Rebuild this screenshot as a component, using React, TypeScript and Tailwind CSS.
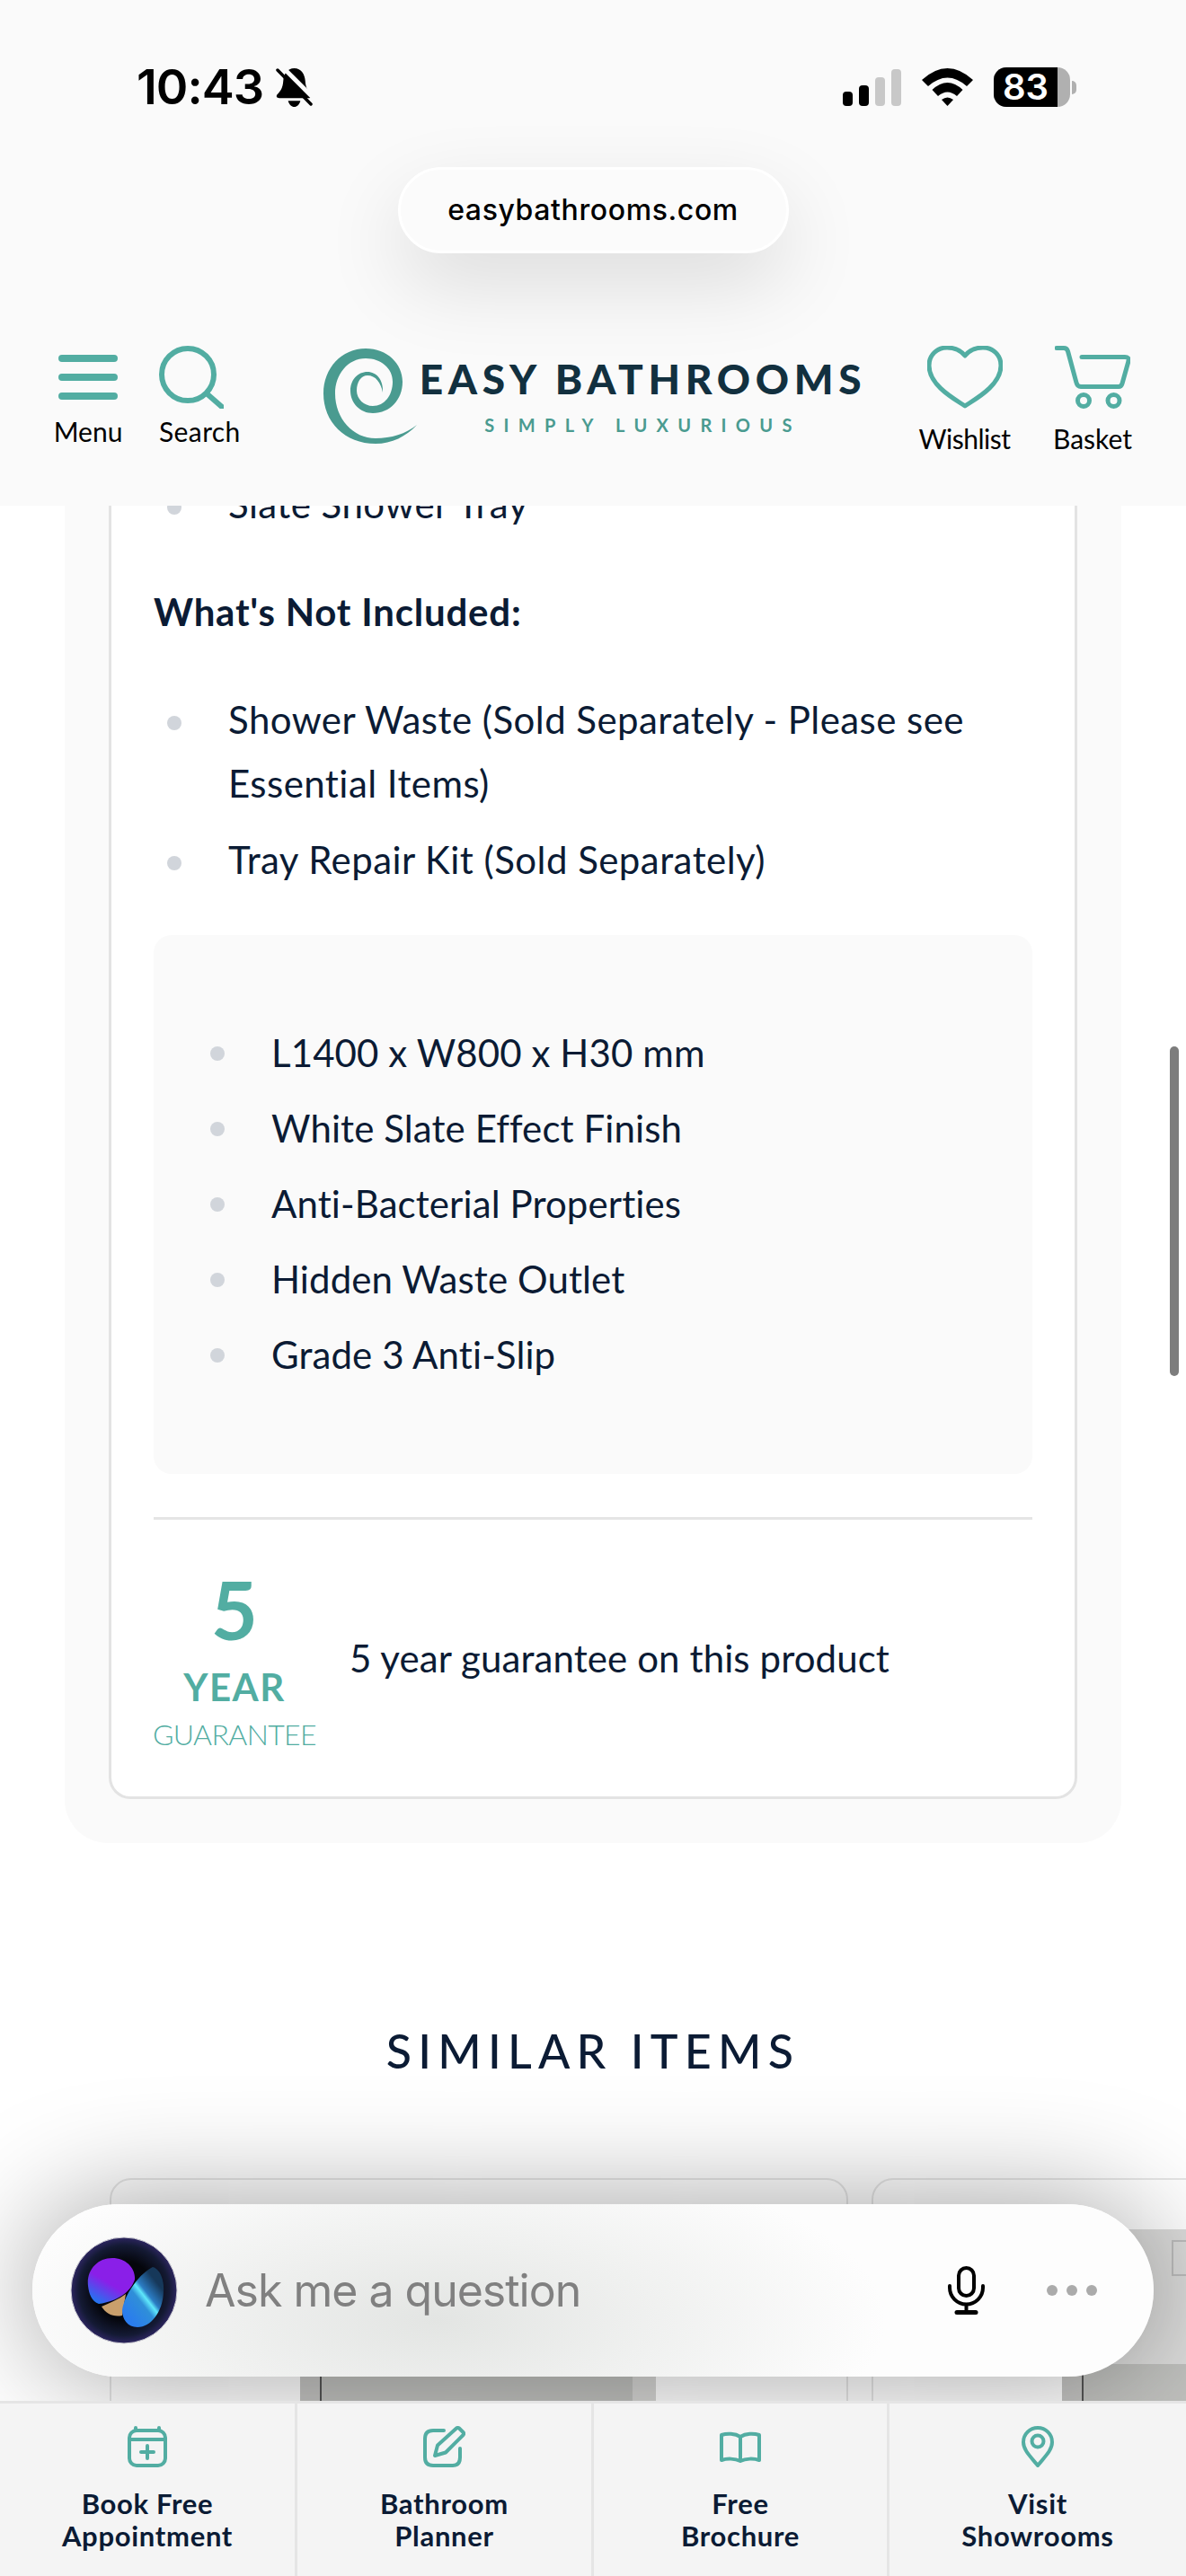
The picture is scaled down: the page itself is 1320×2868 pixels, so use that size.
const teal = "#52ada2";

const notIncluded = [
  ["Shower Waste (Sold Separately - Please see", "Essential Items)"],
  ["Tray Repair Kit (Sold Separately)"],
];

const specs = [
  "L1400 x W800 x H30 mm",
  "White Slate Effect Finish",
  "Anti-Bacterial Properties",
  "Hidden Waste Outlet",
  "Grade 3 Anti-Slip",
];

const StatusBar = () => (
  <div className="flex h-[46px] items-center justify-between pl-[152px] pr-[122px]">
    <div className="flex items-center">
      <span className="font-['Inter',sans-serif] text-[54px] leading-[46px] font-semibold tracking-[-1px] text-black">
        10:43
      </span>
      <svg width="41" height="45" viewBox="0 0 42 46" className="ml-[14px]">
        <path d="M21 1C13 1 9 8 8.500 15C8 24 5 27 1.500 31C0 33 1 35 4 35H38C41 35 42 33 40.500 31C37 27 34 24 33.500 15C33 8 29 1 21 1Z" fill="#000" />
        <path d="M14 38H28C27 42 24 45 21 45C18 45 15 42 14 38Z" fill="#000" />
        <path d="M7 -1L46 38" stroke="#fafafa" strokeWidth="5" />
        <path d="M2 3L40 42" stroke="#000" strokeWidth="3.500" strokeLinecap="round" />
      </svg>
    </div>
    <div className="flex items-center">
      <div className="flex items-end gap-[7px]">
        <div className="h-[16px] w-[11px] rounded-[4px] bg-black" />
        <div className="h-[23px] w-[11px] rounded-[4px] bg-black" />
        <div className="h-[32px] w-[11px] rounded-[4px] bg-[#c8c8c8]" />
        <div className="h-[41px] w-[11px] rounded-[4px] bg-[#c8c8c8]" />
      </div>
      <svg width="57" height="42" viewBox="0 0 57 42" className="ml-[23px]">
        <path d="M0 13Q28.500 -13 57 13L50 20Q28.500 1 7 20Z" fill="#000" />
        <path d="M11.500 24Q28.500 8 45.500 24L39 31Q28.500 22 18 31Z" fill="#000" />
        <path d="M22 35Q28.500 30 35 35L28.500 42Z" fill="#000" />
      </svg>
      <div className="ml-[23px] flex items-center">
        <div className="flex h-[44px] w-[85px] rounded-[14px] bg-[#b0b0b0]">
          <div className="flex h-full w-[71px] items-center justify-center rounded-l-[14px] bg-black font-['Inter',sans-serif] text-[40px] leading-[40px] font-semibold text-white">
            83
          </div>
        </div>
        <div className="ml-[2px] h-[15px] w-[5px] rounded-r-full bg-[#b0b0b0]" />
      </div>
    </div>
  </div>
);

const Logo = () => (
  <div className="ml-[92px] flex w-[601px]">
    <svg width="104" height="106" viewBox="0 0 104 106" className="mt-[3px] shrink-0">
      <path
        d="M104 85C92 98 76 106 58 106C24 106 0 82 0 50C0 22 20 0 47 0C71 0 88 17 88 37C88 57 74 72 55 72C41 72 30 61 30 47C30 35 38 26 49 26C59 26 67 35 66 49C64 38 58 30 49 30C42 30 37 37 37 47C37 56 45 64 55 64C68 64 77 52 77 37C77 22 64 11 47 11C27 11 13 29 13 50C13 78 33 100 58 100C75 100 92 95 104 85Z"
        fill="#4a9b90"
      />
    </svg>
    <div className="ml-[6px] flex w-[491px] flex-col items-center font-['Lato',sans-serif]">
      <div className="mt-[14px] text-[46px] leading-[46px] font-black tracking-[5.700px] whitespace-nowrap text-[#12303f]">
        EASY BATHROOMS
      </div>
      <div className="mt-[18px] text-[20px] leading-[20px] font-bold tracking-[10.300px] whitespace-nowrap text-[#4a9b90]">
        SIMPLY LUXURIOUS
      </div>
    </div>
  </div>
);

const Header = () => (
  <header className="relative z-10 h-[563px] shrink-0 bg-[#fafafa] pt-[74px]">
    <StatusBar />
    <div className="mx-auto mt-[66px] flex h-[96px] w-[435px] items-center justify-center rounded-full border-[3px] border-white bg-[#fbfbfb] font-['Inter',sans-serif] text-[32px] font-medium tracking-[0.6px] text-black shadow-[0_34px_90px_rgba(0,0,0,0.12)]">
      easybathrooms.com
    </div>
    <div className="mt-[103px] flex pl-[61px] font-['Lato',sans-serif] text-[30px] leading-[36px] text-black">
      <div className="flex w-[74px] flex-col items-center">
        <svg width="66" height="70" viewBox="0 0 66 70">
          <path d="M4 14H62M4 35H62M4 56H62" stroke={teal} strokeWidth="8" strokeLinecap="round" />
        </svg>
        <span className="mt-[7px]">Menu</span>
      </div>
      <div className="ml-[42px] flex w-[91px] flex-col items-start">
        <svg width="72" height="70" viewBox="0 0 72 70" fill="none" stroke={teal} strokeWidth="6">
          <circle cx="32" cy="32" r="29" />
          <path d="M54 54L70 68" strokeLinecap="round" />
        </svg>
        <span className="mt-[7px] tracking-[0.4px]">Search</span>
      </div>
      <Logo />
      <div className="ml-[64px] flex w-[97px] flex-col items-center">
        <svg width="84" height="70" viewBox="0 0 84 70" fill="none" stroke={teal} strokeWidth="5" strokeLinejoin="round">
          <path d="M42 67C30 59 2 44 2 22C2 10 11 2 22 2C31 2 38 6 42 11C46 6 53 2 62 2C73 2 82 10 82 22C82 44 54 59 42 67Z" />
        </svg>
        <span className="mt-[15px] tracking-[-0.5px]">Wishlist</span>
      </div>
      <div className="ml-[50px] flex w-[88px] flex-col items-center">
        <svg width="84" height="70" viewBox="0 0 84 70" fill="none" stroke={teal} strokeWidth="5" strokeLinecap="round">
          <path d="M2 2.500H10Q13.500 2.500 14.500 6L24 41Q25 45.500 29 45.500H71Q74 45.500 75 42L82 17Q83 12.500 78 12.500H30" />
          <circle cx="32" cy="61" r="6.500" />
          <circle cx="65.500" cy="61" r="6.500" />
        </svg>
        <span className="mt-[15px]">Basket</span>
      </div>
    </div>
  </header>
);

const Bullet = ({ text, lines }: { text?: string; lines?: string[] }) => (
  <li className="flex">
    <span className="mt-[31px] ml-[15px] h-[16px] w-[16px] shrink-0 rounded-full bg-[#d1d5db]" />
    <span className="ml-[52px] tracking-[0.45px]">
      {text}
      {lines?.map((line) => (
        <span key={line} className="block whitespace-nowrap">
          {line}
        </span>
      ))}
    </span>
  </li>
);

const ProductPanel = () => (
  <div className="mx-[72px] -mt-[37px] rounded-b-[48px] bg-[#fafafa] px-[49px] pb-[49px]">
    <div className="rounded-b-[24px] border-[3px] border-t-0 border-[#e3e3e3] bg-white px-[47px] text-[42px] leading-[71px] tracking-[0.1px] text-[#0b1b34]">
      <ul>
        <Bullet text="Slate Shower Tray" />
      </ul>
      <p className="mt-[49px] font-bold tracking-[0.8px]">What's Not Included:</p>
      <ul className="mt-[49px] flex flex-col gap-[14px]">
        {notIncluded.map((lines) => (
          <Bullet key={lines[0]} lines={lines} />
        ))}
      </ul>
      <div className="mt-[48px] h-[600px] rounded-[20px] bg-[#fafafa] pt-[89px]">
        <ul className="leading-[84px]">
          {specs.map((spec) => (
            <li key={spec} className="flex">
              <span className="mt-[35px] ml-[63px] h-[16px] w-[16px] shrink-0 rounded-full bg-[#d1d5db]" />
              <span className="ml-[52px]">{spec}</span>
            </li>
          ))}
        </ul>
      </div>
      <div className="mt-[48px] flex h-[311px] items-center border-t-[3px] border-[#e5e5e5]">
        <div className="flex w-[180px] flex-col items-center text-[#52ada2]">
          <span className="text-[90px] leading-[90px] font-bold">5</span>
          <span className="mt-[21px] text-[42px] leading-[42px] font-bold tracking-[1.500px]">YEAR</span>
          <span className="mt-[16px] text-[32px] leading-[32px] font-light tracking-[-0.6px]">GUARANTEE</span>
        </div>
        <p className="ml-[38px]">5 year guarantee on this product</p>
      </div>
    </div>
  </div>
);

const SimilarCard = () => (
  <div className="h-[400px] w-[822px] shrink-0 rounded-t-[24px] border-2 border-[#e6e6e6] bg-white pt-[55px] pl-[210px]">
    <div className="relative h-full w-[396px] bg-[#dcdcdb]">
      <div className="absolute top-[12px] left-[122px] h-[40px] w-[60px] border-2 border-[#bdbdbd]" />
      <div className="absolute top-[150px] left-0 flex h-[250px] w-full bg-[#c8c8c6]">
        <div className="w-[24px] border-r-2 border-[#555] bg-[#c4c4c2]" />
        <div className="w-[346px] bg-[#c0c1be]" />
        <div className="flex-1 bg-[#d6d6d4]" />
      </div>
    </div>
  </div>
);

const ChatBar = () => (
  <div className="absolute top-[2454px] left-[36px] z-[5] flex h-[192px] w-[1248px] items-center rounded-full bg-[radial-gradient(ellipse_500px_190px_at_450px_130px,#e3e5e3,#fdfdfd)] pl-[42px] shadow-[0_0_130px_rgba(0,0,0,0.38)]">
    <svg width="120" height="120" viewBox="0 0 120 120" className="shrink-0">
      <defs>
        <radialGradient id="orbBg" cx="50%" cy="50%" r="50%">
          <stop offset="0.55" stopColor="#05060c" />
          <stop offset="0.85" stopColor="#141a34" />
          <stop offset="1" stopColor="#2c2560" />
        </radialGradient>
        <linearGradient id="orbPurple" x1="0.7" y1="0.2" x2="0.2" y2="1">
          <stop offset="0.45" stopColor="#8a1fe8" />
          <stop offset="1" stopColor="#1f78f0" />
        </linearGradient>
        <linearGradient id="orbLeaf" x1="0.9" y1="0.1" x2="0.2" y2="0.9">
          <stop offset="0.15" stopColor="#16385a" />
          <stop offset="0.42" stopColor="#2b7cc4" />
          <stop offset="0.5" stopColor="#5fe8fb" />
          <stop offset="0.62" stopColor="#2f8fd8" />
          <stop offset="1" stopColor="#2a7cee" />
        </linearGradient>
      </defs>
      <circle cx="60" cy="60" r="59" fill="url(#orbBg)" stroke="#cfcfd4" strokeWidth="1" />
      <path d="M35 78C44 74 54 70 62 64L58 88C48 90 40 86 35 78Z" fill="#c99f6c" />
      <path d="M20 55C18 38 30 24 47 24C62 24 73 35 72 48C68 60 55 72 32 75C24 72 21 64 20 55Z" fill="url(#orbPurple)" />
      <path d="M92 34C100 36 105 48 104 62C103 84 90 101 75 101C64 101 58 92 58 82C60 66 76 42 92 34Z" fill="url(#orbLeaf)" />
    </svg>
    <span className="ml-[30px] font-['Inter',sans-serif] text-[50px] tracking-[-1px] text-[#808080]">
      Ask me a question
    </span>
    <svg width="41" height="54" viewBox="0 0 41 54" fill="none" stroke="#000" strokeWidth="4" className="ml-auto shrink-0">
      <rect x="12" y="2" width="17" height="31" rx="8.500" />
      <path d="M2 22V24A18.500 18.500 0 0 0 39 24V22" strokeLinecap="round" />
      <path d="M20.500 42V50" />
      <path d="M10 51.500H31" strokeWidth="5" strokeLinecap="round" />
    </svg>
    <div className="mr-[63px] ml-[69px] flex gap-[10px]">
      <div className="h-[12px] w-[12px] rounded-full bg-[#ababab]" />
      <div className="h-[12px] w-[12px] rounded-full bg-[#ababab]" />
      <div className="h-[12px] w-[12px] rounded-full bg-[#ababab]" />
    </div>
  </div>
);

const navIconClass = "h-[46px] shrink-0";

const BottomNav = () => (
  <nav className="relative z-10 flex h-[195px] shrink-0 border-t-[3px] border-[#e5e5e5] bg-[#f4f4f4] font-['Lato',sans-serif] text-[31px] leading-[36px] font-bold tracking-[0.7px] text-[#0b1b34]">
    <div className="flex w-[328px] flex-col items-center pt-[25px]">
      <svg width="44" height="46" viewBox="0 0 44 46" fill="none" stroke={teal} strokeWidth="4" strokeLinecap="round" className={navIconClass}>
        <rect x="2" y="5" width="40" height="39" rx="8" />
        <path d="M2 15H42M9 2V5M35 2V5M22 22V36M15 29H29" />
      </svg>
      <span className="mt-[22px] text-center">
        Book Free
        <br />
        Appointment
      </span>
    </div>
    <div className="flex w-[330px] flex-col items-center border-l-[3px] border-[#e5e5e5] pt-[25px]">
      <svg width="47" height="46" viewBox="0 0 47 46" fill="none" stroke={teal} strokeWidth="4" strokeLinecap="round" strokeLinejoin="round" className={navIconClass}>
        <path d="M23 5H11Q2 5 2 14V35Q2 44 11 44H33Q41 44 41 35V25" />
        <path d="M13 33L16 21.500L37 2.500Q38.500 1.500 40 2.500L44.500 7Q46 8.500 44.500 10L25 29.500Z" />
      </svg>
      <span className="mt-[22px] text-center">
        Bathroom
        <br />
        Planner
      </span>
    </div>
    <div className="flex w-[329px] flex-col items-center border-l-[3px] border-[#e5e5e5] pt-[25px]">
      <svg width="46" height="46" viewBox="0 -6 46 46" fill="none" stroke={teal} strokeWidth="4" strokeLinejoin="round" className={navIconClass}>
        <path d="M23 6C17 2 8 2 2 4V32C8 30 17 30 23 33C29 30 38 30 44 32V4C38 2 29 2 23 6ZM23 6V33" />
      </svg>
      <span className="mt-[22px] text-center">
        Free
        <br />
        Brochure
      </span>
    </div>
    <div className="flex flex-1 flex-col items-center border-l-[3px] border-[#e5e5e5] pt-[25px]">
      <svg width="36" height="46" viewBox="0 0 36 46" fill="none" stroke={teal} strokeWidth="4" strokeLinejoin="round" className={navIconClass}>
        <path d="M18 44C10 34 2 27 2 18A16 16 0 0 1 34 18C34 27 26 34 18 44Z" />
        <circle cx="18" cy="17" r="6.500" />
      </svg>
      <span className="mt-[22px] text-center">
        Visit
        <br />
        Showrooms
      </span>
    </div>
  </nav>
);

export default function App() {
  return (
    <div className="relative flex h-[2868px] w-[1320px] flex-col overflow-hidden bg-white font-['Lato',sans-serif]">
      <Header />
      <main className="min-h-0 flex-1 overflow-hidden">
        <ProductPanel />
        <h2 className="mt-[205px] text-center text-[52px] leading-[52px] font-medium tracking-[7.200px] text-[#0b1b34]">
          SIMILAR ITEMS
        </h2>
        <div className="mt-[116px] flex gap-[26px] pl-[122px]">
          <SimilarCard />
          <SimilarCard />
        </div>
      </main>
      <ChatBar />
      <div className="absolute top-[1165px] left-[1302px] z-[5] h-[367px] w-[10px] rounded-full bg-[#7d7d7d]" />
      <BottomNav />
    </div>
  );
}
